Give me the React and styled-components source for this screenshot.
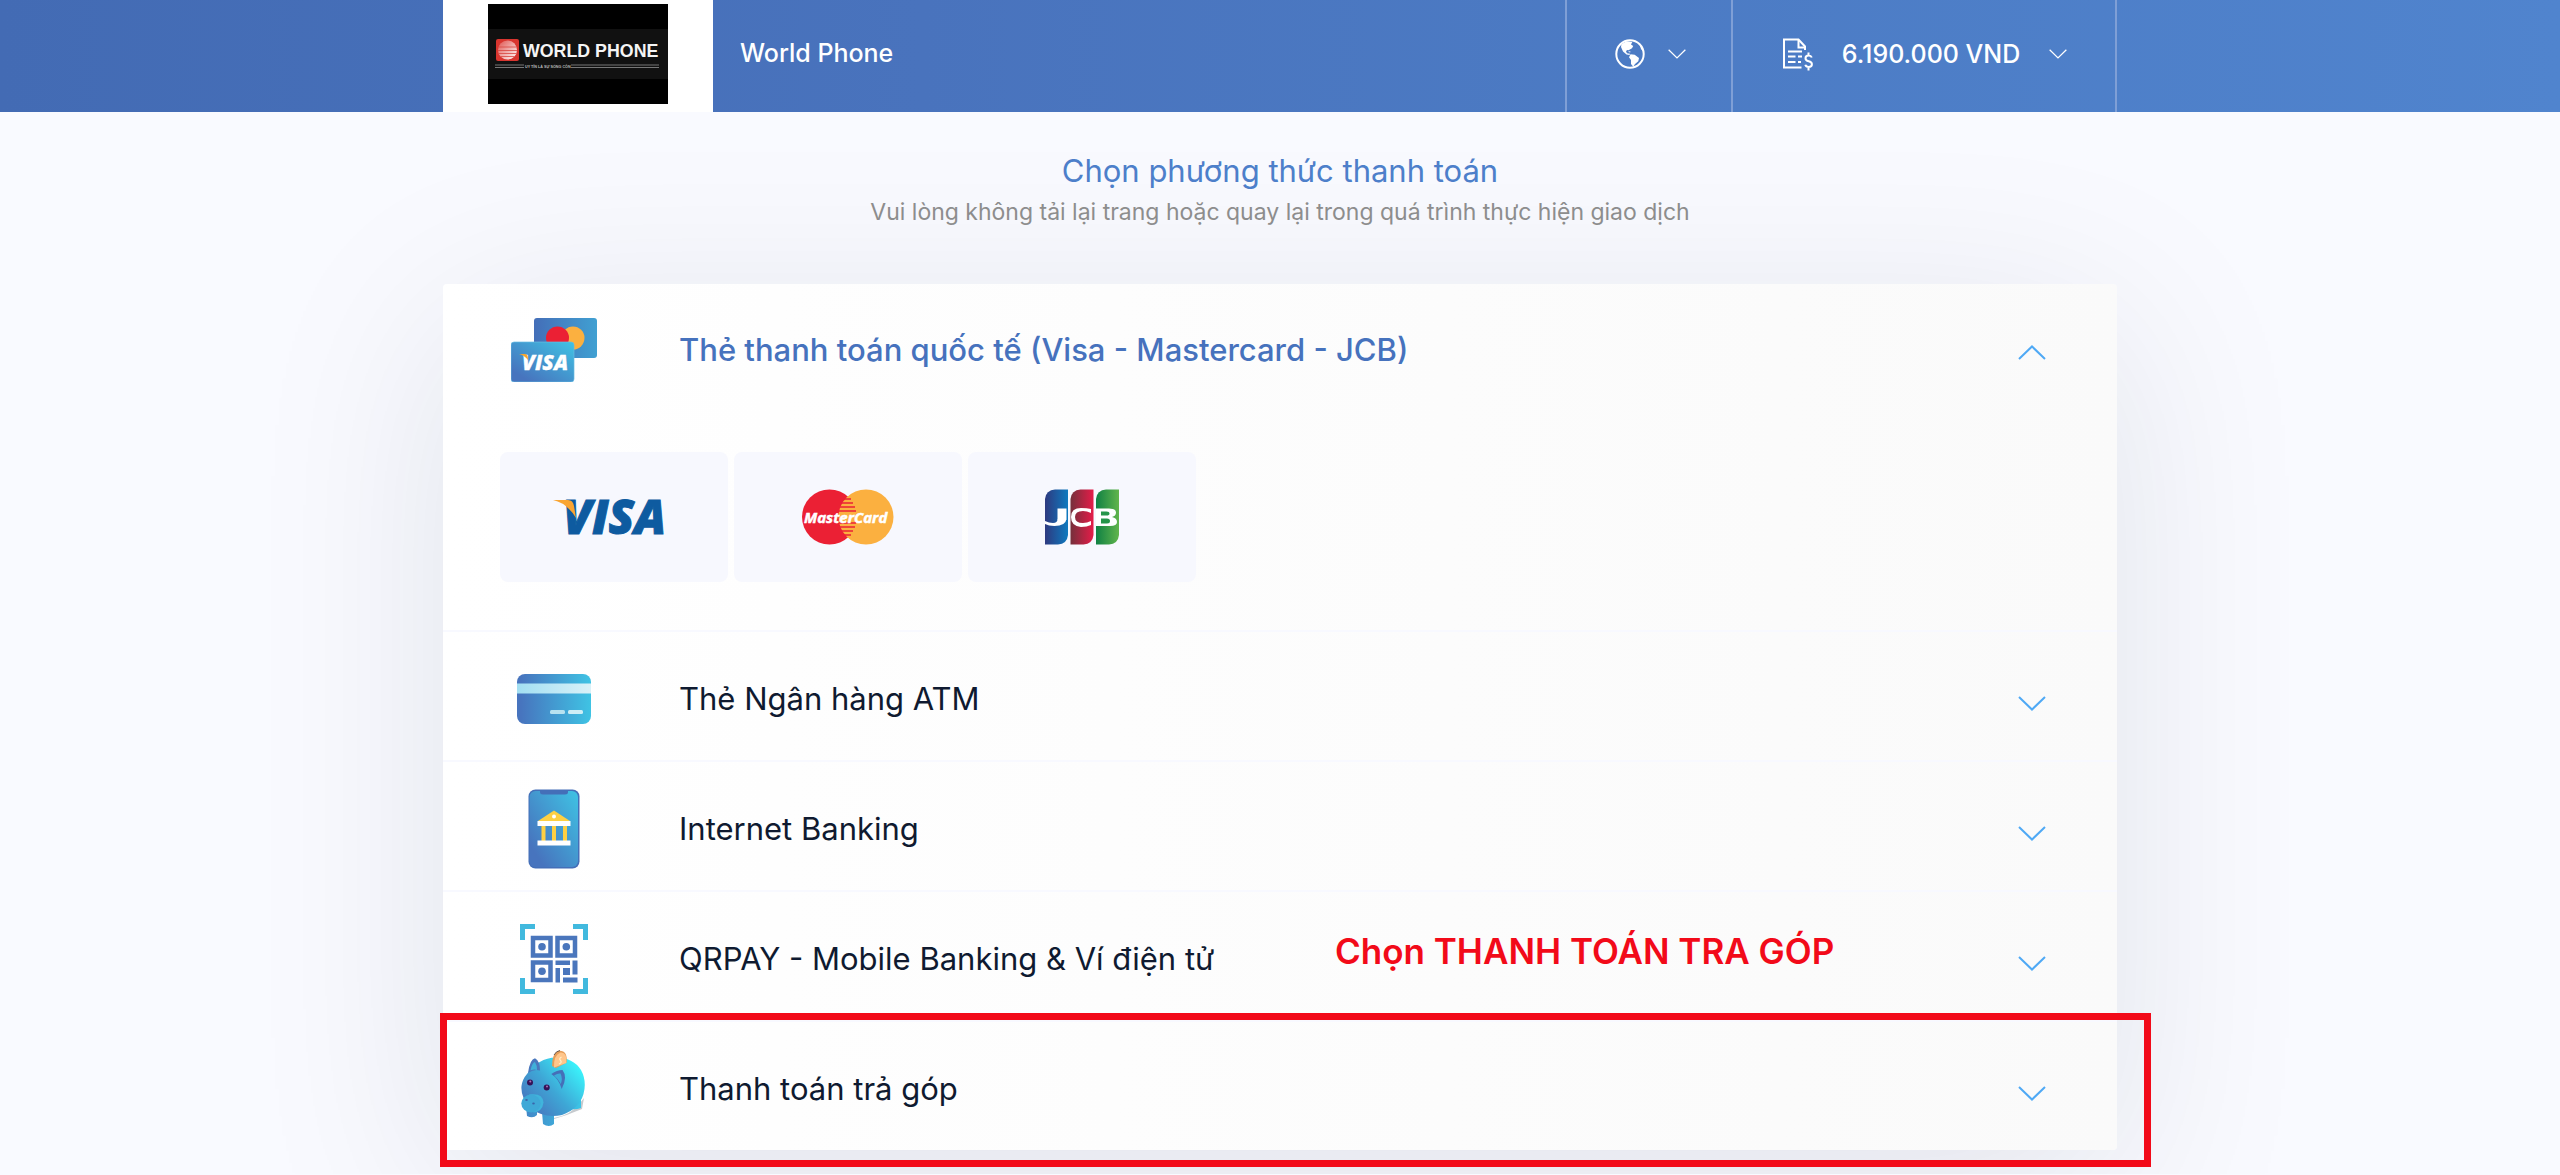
import React from "react";
import styled, { createGlobalStyle } from "styled-components";

const Global = createGlobalStyle`
  *, *::before, *::after { box-sizing: border-box; }
  body { margin: 0; background: #f9faff; font-family: Inter, "Noto Sans", sans-serif; color: #0f1a30; overflow-x: hidden; }
  button { font: inherit; color: inherit; background: none; border: 0; padding: 0; cursor: pointer; }
  h1, h2, p { margin: 0; font-weight: 400; }
  svg { display: block; flex: none; }
`;

const Header = styled.header`
  position: relative;
  z-index: 1;
  background: linear-gradient(90deg, #436bb4 0%, #4973bd 36%, #4c7bc4 64%, #5084ce 100%);
  color: #fff;
`;

const Container = styled.div`
  width: 100%;
  max-width: 1674px;
  margin: 0 auto;
`;

const Bar = styled(Container)`
  display: flex;
  height: 112px;
`;

const LogoBox = styled.div`
  width: 270px;
  padding: 4px 0 0 45px;
  background: #fff;
`;

const Merchant = styled.div`
  flex: 1;
  padding: 35px 27px 0;
  font-size: 25px;
  line-height: 36px;
  font-weight: 500;
`;

const HeaderButton = styled.button`
  display: flex;
  align-items: center;
  justify-content: center;
  gap: ${(p) => p.$gap}px;
  width: ${(p) => p.$width}px;
  padding: 0 0 4px 2px;
  border-left: 2px solid #7f9fd6;
  border-right: ${(p) => (p.$last ? "2px solid #7f9fd6" : "0")};
  font-size: 25px;
  line-height: 36px;
  font-weight: 500;
`;

const Intro = styled.section`
  display: flex;
  flex-direction: column;
  align-items: center;
  padding: 37px 0 53px;
  text-align: center;
`;

const Title = styled.h1`
  font-size: 31px;
  line-height: 44px;
  color: #4d7fca;
`;

const Subtitle = styled.p`
  font-size: 23px;
  line-height: 38px;
  color: #8d8d8d;
`;

const Card = styled.main`
  border-radius: 4px;
  background: linear-gradient(90deg, #fff, #fafafa);
  box-shadow: 0 40px 200px rgba(15, 26, 48, 0.1);
  margin-bottom: 24px;
`;

const Method = styled.section`
  position: relative;
  & + & { border-top: 2px solid #f8f9ff; }
`;

const MethodButton = styled.button`
  display: grid;
  grid-template-columns: 221px 1fr 171px;
  column-gap: 15px;
  align-items: center;
  width: 100%;
  height: ${(p) => (p.$open ? 132 : 128)}px;
  padding-top: ${(p) => (p.$open ? 0 : 6)}px;
  text-align: left;
  font-size: 31px;
  line-height: 44px;
  font-weight: ${(p) => (p.$open ? 500 : 400)};
  color: ${(p) => (p.$open ? "#4672bd" : "#0f1a30")};
`;

const IconSlot = styled.span`
  display: flex;
  justify-content: center;
`;

const ArrowSlot = styled.span`
  display: flex;
  justify-content: center;
  padding-top: ${(p) => (p.$open ? 4 : 8)}px;
`;

const Tiles = styled.div`
  display: flex;
  gap: 6px;
  padding: 36px 57px 48px;
`;

const Tile = styled.button`
  display: flex;
  align-items: center;
  justify-content: center;
  width: 228px;
  height: 130px;
  border-radius: 8px;
  background: #f7f8fe;
`;

const Note = styled.p`
  position: absolute;
  left: 892px;
  top: 37px;
  font-size: 35px;
  line-height: 44px;
  font-weight: 600;
  white-space: nowrap;
  color: #f20a19;
  pointer-events: none;
`;

const Highlight = styled.div`
  position: absolute;
  inset: -9px -34px -17px -3px;
  border: 7px solid #f20a19;
  pointer-events: none;
`;

function Chevron({ up, width = 28, color = "#4fa9f5" }) {
  return (
    <svg width={width} height={width / 2 + 1} viewBox="0 0 28 15" fill="none" stroke={color} strokeWidth="2" aria-hidden="true">
      <path d={up ? "M1 14 14 1.500 27 14" : "M1 1 14 13.500 27 1"} />
    </svg>
  );
}

function WorldPhoneLogo() {
  return (
    <svg width="180" height="100" viewBox="0 0 180 100" role="img" aria-label="World Phone">
      <defs>
        <linearGradient id="wpBall" x1="0" y1="0" x2="1" y2="1">
          <stop offset="0" stopColor="#e0524e" />
          <stop offset="1" stopColor="#fff" />
        </linearGradient>
      </defs>
      <rect width="180" height="100" fill="#000" />
      <rect y="25" width="180" height="50" fill="#111" />
      <rect x="8" y="35" width="23" height="22" rx="2" fill="#d8352f" />
      <circle cx="19.500" cy="46" r="9.500" fill="url(#wpBall)" />
      <path d="M11 43h17M10 46.500h19M10.500 49.500h18M12.500 52.500h14" stroke="#d8453f" strokeWidth=".8" />
      <text x="35" y="52.500" fontFamily="Liberation Sans, sans-serif" fontWeight="700" fontSize="17.800" fill="#f5f5f5">WORLD PHONE</text>
      <path d="M7 61h29M7 63.500h29M83 61h88M83 63.500h88" stroke="#777" strokeWidth="1" />
      <text x="37" y="63.500" fontFamily="Liberation Sans, sans-serif" fontWeight="700" fontSize="3.700" fill="#bbb">UY TÍN LÀ SỰ SỐNG CÒN</text>
    </svg>
  );
}

function Globe() {
  return (
    <svg width="30" height="30" viewBox="0 0 30 30" aria-hidden="true">
      <circle cx="15" cy="15" r="13.700" fill="none" stroke="#fff" strokeWidth="2" />
      <path fill="#fff" d="M6.500 5 11.700 2.300 17.300 3 16 5.500 18.200 7 17 9.200 13.500 11.300 12 11 11 12.500 12 14.300 15 14.800 14.500 16 11.500 15.500 8 12.500 6 8ZM15.500 15.200 19.700 15.700 24 19 23.300 22.300 20 25 18.300 27.800 16 25V21L14 18.300ZM24.500 5 26 10 28.500 13 28 9ZM13.500 12.300l2 .3-.3.800-1.500-.3Z" />
    </svg>
  );
}

function Invoice() {
  return (
    <svg width="30" height="33" viewBox="0 0 30 33" fill="none" stroke="#fff" strokeWidth="2" aria-hidden="true">
      <path d="M18.500 29.500H1V1.500h14.500l6.500 7V12" />
      <path d="M15.500 2v7.500H22" />
      <path d="M5 13.500h14M5 18.500h7.500M5 24h7.500M15 18.500h4M15 24h3" />
      <path d="M28.800 19.500q-.8-2-3.300-2-3 0-3 2.700 0 2.300 3.200 3t3.200 3q0 2.800-3.200 2.800-2.800 0-3.400-2.200M25.500 14.500v3M25.500 29v3.500" />
    </svg>
  );
}

function Blues({ id }) {
  return (
    <linearGradient id={id} x1="0" y1="1" x2="1" y2="0">
      <stop offset=".15" stopColor="#4774be" />
      <stop offset="1" stopColor="#3fc3e4" />
    </linearGradient>
  );
}

function CardsIcon() {
  return (
    <svg width="86" height="64" viewBox="0 0 86 64" aria-hidden="true">
      <defs>
        <Blues id="cardFront" />
        <linearGradient id="cardBack"><stop offset="0" stopColor="#446eb8" /><stop offset="1" stopColor="#40a0d2" /></linearGradient>
      </defs>
      <rect x="23" width="63" height="40" rx="3" fill="url(#cardBack)" />
      <circle cx="62" cy="20" r="11.500" fill="#fbb040" />
      <circle cx="46.500" cy="20" r="11.500" fill="#eb2034" />
      <rect y="24" width="63" height="40" rx="3" fill="url(#cardFront)" stroke="#69bce2" strokeWidth=".7" />
      <text x="11" y="51.500" fontFamily="Open Sans, sans-serif" fontWeight="800" fontStyle="italic" fontSize="21" fill="#fff" stroke="#fff" strokeWidth=".3">VISA</text>
      <path d="M8 36h6q3 0 3 6-4-5-9-6Z" fill="#f7a52c" />
    </svg>
  );
}

function AtmIcon() {
  return (
    <svg width="74" height="50" viewBox="0 0 74 50" aria-hidden="true">
      <defs>
        <linearGradient id="atm"><stop offset=".05" stopColor="#4774be" /><stop offset="1" stopColor="#3fc3e4" /></linearGradient>
        <linearGradient id="atmBand"><stop offset="0" stopColor="#a2dff2" /><stop offset="1" stopColor="#d9f1f8" /></linearGradient>
      </defs>
      <rect width="74" height="50" rx="8" fill="url(#atm)" />
      <rect y="9.500" width="74" height="10" fill="url(#atmBand)" />
      <rect x="33" y="36" width="15" height="4" rx="1.500" fill="#b8e2f0" />
      <rect x="51" y="36" width="15" height="4" rx="1.500" fill="#cdeef6" />
    </svg>
  );
}

function PhoneIcon() {
  return (
    <svg width="52" height="80" viewBox="0 0 52 80" aria-hidden="true">
      <defs><Blues id="phone" /></defs>
      <rect x=".5" y=".5" width="51" height="79" rx="7" fill="#446fb8" />
      <rect x="1.500" y="2" width="48.500" height="76" rx="6" fill="url(#phone)" />
      <path d="M12 1h28v2q0 2.500-3 2.500H15q-3 0-3-2.500Z" fill="#446fb8" />
      <path d="M10 32 26 21.500 42 32Z" fill="#fdd043" />
      <circle cx="26" cy="27.500" r="2" fill="#fff" />
      <path d="M13.500 37h4v15h-4zM24 37h4v15h-4zM35 37h4v15h-4z" fill="#fdd043" />
      <path d="M9.500 32h33v5h-33zM9.500 51.500h33v5h-33z" fill="#fff" />
    </svg>
  );
}

function QrIcon() {
  return (
    <svg width="68" height="70" viewBox="0 0 68 70" fill="none" aria-hidden="true">
      <path d="M2.500 16V2.500H15M53 2.500h12.500V16M2.500 54v13.500H15M53 67.500h12.500V54" stroke="#41b9de" strokeWidth="5" />
      <path d="M13 14h17.500v17.500H13zM37.500 14H55v17.500H37.500zM13 38.500h17.500V56H13z" stroke="#4a76bc" strokeWidth="4.500" />
      <g fill="#4a76bc">
        <circle cx="22" cy="22.800" r="3.800" />
        <circle cx="46.300" cy="22.800" r="3.800" />
        <circle cx="22" cy="47.300" r="3.800" />
        <path d="M35.500 36.500H50V41H35.500zM52.500 36.500h5v14h-5zM43 44h7v7h-7zM35.500 44H40v14.500h-4.500zM43 53.500h14.500v5H43z" />
      </g>
    </svg>
  );
}

function PigIcon() {
  return (
    <svg width="66" height="78" viewBox="0 0 66 78" aria-hidden="true">
      <defs>
        <linearGradient id="pig" x1=".1" y1=".8" x2=".9" y2=".15">
          <stop offset="0" stopColor="#4679c0" /><stop offset=".45" stopColor="#3ea7d6" /><stop offset="1" stopColor="#3af3fb" />
        </linearGradient>
        <linearGradient id="leg"><stop offset="0" stopColor="#4387c7" /><stop offset="1" stopColor="#3bc5e7" /></linearGradient>
      </defs>
      <path d="M33 68Q50 65 59 53l4-5-2 11Q47 65 33 69Z" fill="#c6cace" />
      <path d="M5 56h11v9q-4 4-10 1ZM21 62h12v12q-5 4-11 0ZM47 50h13v8q-5 2-12 1Z" fill="url(#leg)" />
      <path d="M6 24Q17 8 35 7.500 52 7.500 60 20 66 31 62.500 44 58 59 41 65 24 69 9 58-.5 47 .5 36 1.500 29 6 24Z" fill="url(#pig)" />
      <path d="M7 23Q9 9 14 8.300q5 2.700 5 12.200-6-2-12 2.500Z" fill="#4977bd" />
      <path d="M9.500 20.500q1.500-8 4.500-8.500 2 3 2 8-3-1-6.500.5Z" fill="#40b0d9" />
      <path d="M30.300 24Q36 20 41.500 20 47 27 40.700 39 38 29 30.300 24Z" fill="#456fb8" />
      <path d="M33 25.500Q37 23 39.500 23.500 42 29 39.800 34 37 28.500 33 25.500Z" fill="#3badd9" />
      <path d="M31 16Q31 3 38 .7q9-.5 7.500 12L35 18Z" fill="#e59d58" />
      <path d="M33 17.500Q32.500 5 39.500 2.500q7-.5 5.800 10.500Z" fill="#ffc68b" />
      <path d="M40.500 7q-3 1.500-1 3.500t-1.500 3.500" fill="none" stroke="#fff0c8" strokeWidth="1.200" />
      <path d="M33 5q2-4 6-4.500" fill="none" stroke="#4a3a33" strokeWidth=".8" />
      <circle cx="9" cy="32.500" r="3" fill="#351258" /><circle cx="25.700" cy="37.500" r="3" fill="#351258" />
      <circle cx="9.300" cy="31.500" r="1" fill="#ad70b4" /><circle cx="26" cy="36.500" r="1" fill="#ad70b4" />
      <path d="M8 44.500q14-2 14.500 8-1 9-10 10Z" fill="#40b4dc" />
      <ellipse cx="10" cy="53.500" rx="9.700" ry="9" fill="#3fa9d7" />
      <ellipse cx="5.500" cy="50" rx="1.300" ry="1" fill="#3b64aa" /><ellipse cx="12.500" cy="53.500" rx="1.300" ry="1" fill="#3b64aa" />
    </svg>
  );
}

function VisaLogo() {
  return (
    <svg width="122" height="76" viewBox="0 -18 122 76" role="img" aria-label="Visa">
      <text x="10" y="37" fontFamily="Open Sans, sans-serif" fontWeight="800" fontStyle="italic" fontSize="47" fill="#0e5ba0" stroke="#0e5ba0" strokeWidth="1">VISA</text>
      <path d="M0 3h15q5 0 6 6l2 12Q14 6 0 3Z" fill="#f9a533" />
    </svg>
  );
}

function MastercardLogo() {
  return (
    <svg width="94" height="56" viewBox="0 0 94 56" role="img" aria-label="MasterCard">
      <circle cx="28.500" cy="28" r="27.500" fill="#eb2034" />
      <circle cx="65" cy="28" r="27.500" fill="#fbb040" />
      <path d="M43 10h7M41 14h11M39 18h15M38 22h17M38 34h17M39 38h15M41 42h11M43 46h7" stroke="#eb2034" strokeWidth="1.600" />
      <text x="3" y="34" fontFamily="Open Sans, sans-serif" fontWeight="700" fontStyle="italic" fontSize="15" fill="#fff" stroke="#fff" strokeWidth=".5">MasterCard</text>
    </svg>
  );
}

function JcbLogo() {
  return (
    <svg width="74" height="56" viewBox="0 0 74 56" role="img" aria-label="JCB">
      <defs>
        <linearGradient id="jBlue"><stop offset="0" stopColor="#2e3a80" /><stop offset="1" stopColor="#0e7abf" /></linearGradient>
        <linearGradient id="jRed"><stop offset="0" stopColor="#75303b" /><stop offset="1" stopColor="#e51c49" /></linearGradient>
        <linearGradient id="jGreen"><stop offset="0" stopColor="#108144" /><stop offset="1" stopColor="#61b54c" /></linearGradient>
      </defs>
      <path d="M0 10Q1 1 10 .5h13V46q-1 9-10 9.500H0Z" fill="url(#jBlue)" />
      <path d="M25.500 10Q26.500 1 35.500.5h13V46q-1 9-10 9.500h-13Z" fill="url(#jRed)" />
      <path d="M51 10Q52 1 61 .5h13V46q-1 9-10 9.500H51Z" fill="url(#jGreen)" />
      <g fill="#fff">
        <rect x="12.500" y="19.500" width="9" height="11" />
        <path d="M12.500 30h9q-1 7-12 7-6 0-9.500-2v-3q4 2 8 2 4.500 0 4.500-4Z" />
        <path d="M46 20v4q-4-2-8-2-8 0-8 6t8 6q4 0 8-2v4q-4 2-10 2-10-1-10-10t10-9q6 0 10 1Z" />
        <path d="M51 19.500h13q7 0 7 4 0 3.500-4 4.500 5 1 5 5 0 4-7 4H51Z" />
      </g>
      <path d="M56 22.500h5.500q3 0 3 2t-3 2H56ZM56 29.500h6q3 0 3 2.500t-3 2.500h-6Z" fill="#25954a" />
    </svg>
  );
}

const methods = [
  { label: "Thẻ Ngân hàng ATM", icon: <AtmIcon /> },
  { label: "Internet Banking", icon: <PhoneIcon /> },
  { label: "QRPAY - Mobile Banking & Ví điện tử", icon: <QrIcon />, note: "Chọn THANH TOÁN TRA GÓP" },
  { label: "Thanh toán trả góp", icon: <PigIcon />, highlighted: true },
];

export default function App() {
  return (
    <>
      <Global />
      <Header>
        <Bar>
          <LogoBox><WorldPhoneLogo /></LogoBox>
          <Merchant>World Phone</Merchant>
          <HeaderButton $width={166} $gap={23} aria-label="Ngôn ngữ">
            <Globe />
            <Chevron width={18} color="#fff" />
          </HeaderButton>
          <HeaderButton $width={386} $gap={29} $last>
            <Invoice />
            <span>6.190.000 VND</span>
            <Chevron width={18} color="#fff" />
          </HeaderButton>
        </Bar>
      </Header>
      <Container>
        <Intro>
          <Title>Chọn phương thức thanh toán</Title>
          <Subtitle>Vui lòng không tải lại trang hoặc quay lại trong quá trình thực hiện giao dịch</Subtitle>
        </Intro>
        <Card>
          <Method>
            <MethodButton $open aria-expanded="true">
              <IconSlot><CardsIcon /></IconSlot>
              <span>Thẻ thanh toán quốc tế (Visa - Mastercard - JCB)</span>
              <ArrowSlot $open><Chevron up /></ArrowSlot>
            </MethodButton>
            <Tiles>
              <Tile><VisaLogo /></Tile>
              <Tile><MastercardLogo /></Tile>
              <Tile><JcbLogo /></Tile>
            </Tiles>
          </Method>
          {methods.map((m) => (
            <Method key={m.label}>
              <MethodButton aria-expanded="false">
                <IconSlot>{m.icon}</IconSlot>
                <span>{m.label}</span>
                <ArrowSlot><Chevron /></ArrowSlot>
              </MethodButton>
              {m.note && <Note>{m.note}</Note>}
              {m.highlighted && <Highlight />}
            </Method>
          ))}
        </Card>
      </Container>
    </>
  );
}
